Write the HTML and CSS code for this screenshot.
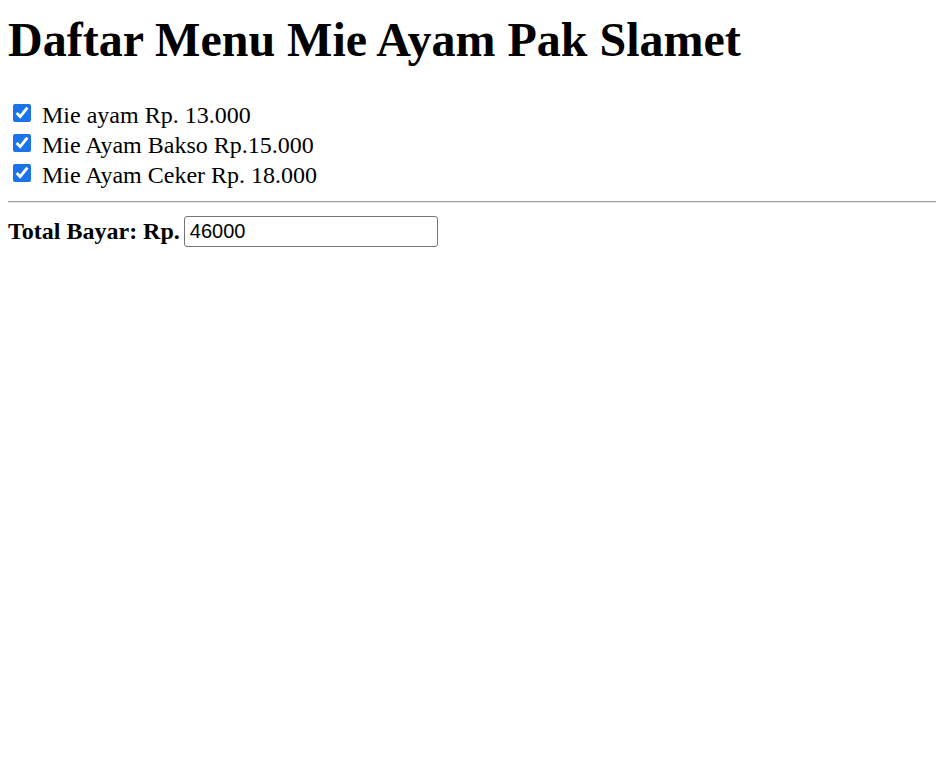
FILE: index.html
```html
<!DOCTYPE html>
<html>
<head>
<meta charset="utf-8">
<link rel="stylesheet" href="styles.css">
</head>
<body>
<h1 class="title">Daftar Menu Mie Ayam Pak Slamet</h1>
<div class="menu">
  <label class="item"><input type="checkbox" class="check" checked>Mie ayam Rp. 13.000</label>
  <label class="item"><input type="checkbox" class="check" checked>Mie Ayam Bakso Rp.15.000</label>
  <label class="item"><input type="checkbox" class="check" checked>Mie Ayam Ceker Rp. 18.000</label>
</div>
<hr class="rule">
<div class="total">
  <b class="total-label">Total Bayar: Rp.</b>
  <input type="text" class="total-input" value="46000">
</div>
</body>
</html>
```
FILE: styles.css
```css
html {
  overflow-x: hidden;
}
body {
  margin: 8px;
  font-family: "Liberation Serif", "Times New Roman", serif;
  font-size: 24px;
  color: #000;
  background: #fff;
}
.title {
  font-size: 48px;
  font-weight: bold;
  margin: 4px 0 33px;
  line-height: 55px;
}
.menu {
  display: flex;
  flex-direction: column;
  padding-left: 5px;
}
.item {
  display: flex;
  align-items: center;
  height: 30px;
  font-size: 24px;
}
.check {
  width: 18px;
  height: 18px;
  margin: 0 11px 4px 0;
  accent-color: #1a73e8;
}
.rule {
  display: block;
  width: calc(100% + 20px);
  box-sizing: border-box;
  margin: 11px 0 13px -2px;
  border: 0;
  border-top: 1px solid #9a9a9a;
  border-bottom: 1px solid #eee;
}
.total {
  display: flex;
  align-items: center;
  gap: 4px;
}
.total-label {
  font-size: 24px;
}
.total-input {
  width: 254px;
  height: 31px;
  box-sizing: border-box;
  font-family: "Liberation Sans", Arial, sans-serif;
  font-size: 20px;
  padding: 1px 5px;
  border: 1px solid #767676;
  border-radius: 3px;
}
```
